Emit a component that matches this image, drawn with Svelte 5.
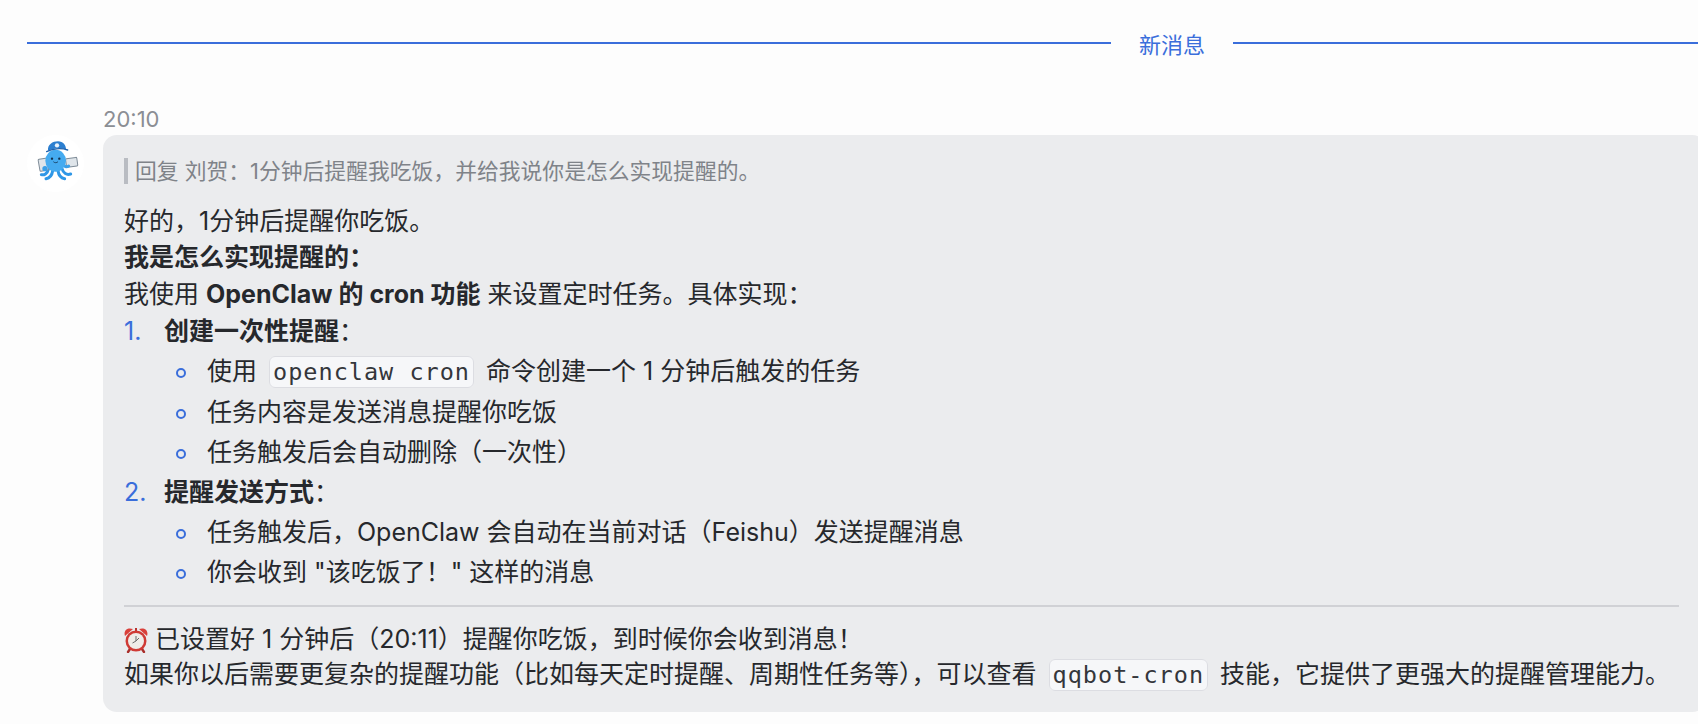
<script>
	const subA = [
		null,
		'任务内容是发送消息提醒你吃饭',
		'任务触发后会自动删除（一次性）'
	];
	const subB = ['任务触发后，OpenClaw 会自动在当前对话（Feishu）发送提醒消息', '你会收到 "该吃饭了！" 这样的消息'];
</script>

<div class="page">
	<div class="divider">
		<span class="rule"></span>
		<span class="label">新消息</span>
		<span class="rule"></span>
	</div>

	<div class="message">
		<div class="avatar">
			<svg viewBox="-9 -9 171 171" width="57" height="57">
				<path d="M56 92C52 108 42 112 34 110M68 98C66 112 58 120 48 122M84 98C86 112 92 120 104 122M96 92C100 106 110 112 122 108" stroke="#2f97e6" stroke-width="9" fill="none" stroke-linecap="round" />
				<rect x="27" y="62" width="26" height="36" rx="3" fill="#dfe5ea" stroke="#7f8c98" stroke-width="3" transform="rotate(-10 40 80)" />
				<rect x="108" y="60" width="34" height="26" rx="3" fill="#dfe5ea" stroke="#7f8c98" stroke-width="3" transform="rotate(-8 125 73)" />
				<circle cx="45" cy="92" r="8" fill="#3a9fe8" />
				<path d="M100 80C106 88 110 88 116 84" stroke="#3a9fe8" stroke-width="9" fill="none" stroke-linecap="round" />
				<ellipse cx="77" cy="68" rx="31" ry="33" fill="#45abf0" />
				<path d="M54 38C52 20 68 10 84 10c16 0 24 12 24 24C90 28 70 30 54 38z" fill="#2c7fd0" />
				<path d="M50 41C66 32 92 29 113 36" stroke="#1f62ad" stroke-width="4" fill="none" stroke-linecap="round" />
				<circle cx="81" cy="22" r="6.5" fill="#eaf3fb" />
				<circle cx="66" cy="62" r="3.5" fill="#12304d" />
				<circle cx="88" cy="62" r="3.5" fill="#12304d" />
				<path d="M71 72c3 3 9 3 12 0" stroke="#12304d" stroke-width="2.4" fill="none" stroke-linecap="round" />
			</svg>
		</div>
		<div class="body">
			<div class="time">20:10</div>
			<div class="bubble">
				<div class="quote">回复 刘贺：1分钟后提醒我吃饭，并给我说你是怎么实现提醒的。</div>
				<p>好的，1分钟后提醒你吃饭。</p>
				<p><strong>我是怎么实现提醒的：</strong></p>
				<p>我使用 <strong>OpenClaw 的 cron 功能</strong> 来设置定时任务。具体实现：</p>
				<ol>
					<li>
						<strong>创建一次性提醒</strong>：
						<ul>
							{#each subA as item}
								<li>{#if item}{item}{:else}使用 <code>openclaw cron</code> 命令创建一个 1 分钟后触发的任务{/if}</li>
							{/each}
						</ul>
					</li>
					<li>
						<strong>提醒发送方式</strong>：
						<ul>
							{#each subB as item}
								<li>{item}</li>
							{/each}
						</ul>
					</li>
				</ol>
				<hr />
				<p class="tight">
					<svg class="clock" viewBox="0 0 24 26" width="24" height="26">
						<path d="M1 9C-1 3 4 0 9 2zM23 9c2-6-3-9-8-7z" fill="#d9403a" />
						<path d="M12 1v3" stroke="#b8332e" stroke-width="2" />
						<path d="M6 22l-2 3M18 22l2 3" stroke="#a92e2a" stroke-width="2.4" stroke-linecap="round" />
						<circle cx="12" cy="14" r="10.5" fill="#cf3a35" />
						<circle cx="12" cy="14" r="8" fill="#efece8" />
						<path d="M12 9v5l-3.5 2M12 14l3-3" stroke="#6a6a6a" stroke-width="1" fill="none" />
					</svg> 已设置好 1 分钟后（20:11）提醒你吃饭，到时候你会收到消息！
				</p>
				<p class="tight">如果你以后需要更复杂的提醒功能（比如每天定时提醒、周期性任务等），可以查看 <code>qqbot-cron</code> 技能，它提供了更强大的提醒管理能力。</p>
			</div>
		</div>
	</div>
</div>

<style>
	:global(body) {
		background: #fdfdfd;
		overflow: hidden;
	}

	.page {
		font-family: Inter, "Noto Sans CJK SC", sans-serif;
		color: #26282c;
		padding-top: 25px;
	}

	.divider {
		display: flex;
		align-items: center;
		padding-left: 27px;
		gap: 28px;
		height: 35px;
	}

	.rule {
		flex: 1;
		height: 2px;
		background: #3a6edb;
	}

	.rule:first-child {
		flex: none;
		width: 1084px;
	}

	.label {
		color: #3a6edb;
		font-size: 22px;
	}

	.message {
		display: flex;
		margin-top: 47px;
		padding-left: 27px;
		margin-right: -8px;
	}

	.avatar {
		width: 57px;
		height: 57px;
		margin: 28px 19px 0 0;
		flex: none;
		border-radius: 50%;
		background: #fff;
	}

	.avatar svg {
		display: block;
	}

	.body {
		flex: 1;
		min-width: 0;
	}

	.time {
		font-size: 22px;
		line-height: 24px;
		color: #8b8e94;
		margin-bottom: 4px;
	}

	.bubble {
		background: #ebecee;
		border-radius: 14px;
		padding: 23px 27px 18px 21px;
		font-size: 25px;
		line-height: 36.3px;
	}

	.quote {
		border-left: 4px solid #b9bcc2;
		padding-left: 7px;
		font-size: 21.8px;
		line-height: 26px;
		color: #7f8389;
		margin-bottom: 19px;
	}

	p {
		margin: 0;
	}

	.tight {
		line-height: 35.5px;
	}

	strong {
		font-weight: 700;
	}

	ol {
		margin: -1px 0 0;
		padding: 0;
		list-style: none;
		counter-reset: step;
		line-height: 40px;
	}

	ol > li {
		counter-increment: step;
	}

	ol > li::before {
		content: counter(step) ".";
		display: inline-block;
		width: 40px;
		color: #3a6edb;
	}

	ul {
		margin: 0;
		padding: 0 0 0 52px;
		list-style: none;
	}

	ul li::before {
		content: "";
		display: inline-block;
		box-sizing: border-box;
		width: 10px;
		height: 10px;
		margin-right: 21px;
		vertical-align: middle;
		border: 2px solid #3a6edb;
		border-radius: 50%;
	}

	code {
		font-family: "DejaVu Sans Mono", monospace;
		font-size: 23.5px;
		letter-spacing: 1px;
		color: #34363b;
		background: #f6f7f9;
		border: 1px solid #dcdde2;
		border-radius: 6px;
		padding: 1px 3px;
		margin: 0 5px;
	}

	hr {
		border: 0;
		height: 2px;
		background: #d0d1d5;
		margin: 13px 0 15px;
	}

	.clock {
		vertical-align: -5px;
	}
</style>
